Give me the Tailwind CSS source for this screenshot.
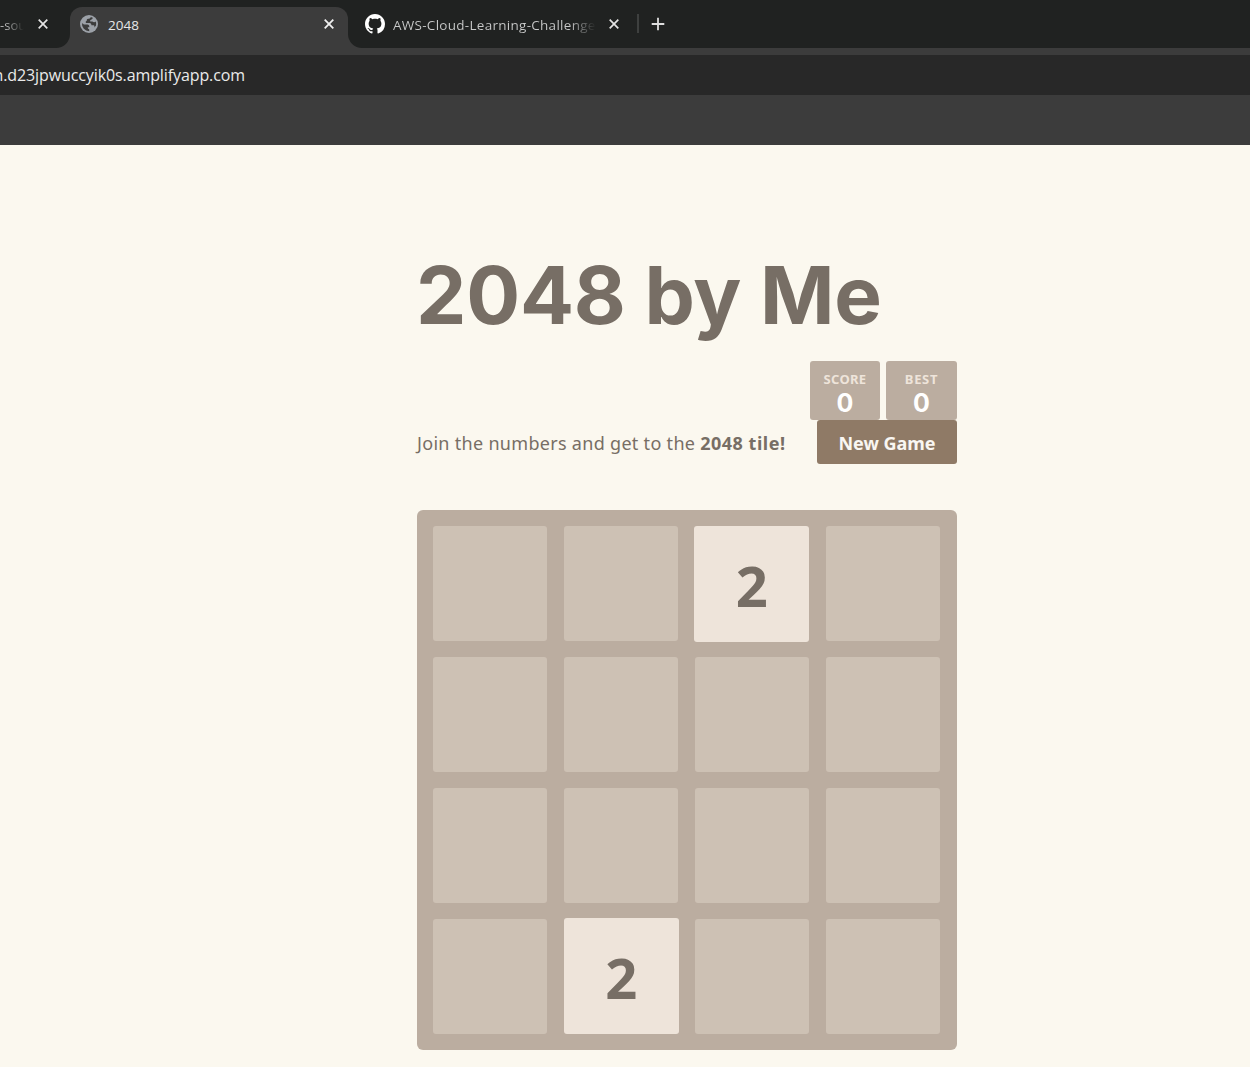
<!DOCTYPE html>
<html lang="en">
<head>
<meta charset="utf-8">
<title>2048</title>
<script src="https://cdn.jsdelivr.net/npm/@tailwindcss/browser@4"></script>
</head>
<body class="w-[1250px] h-[1067px] overflow-hidden bg-[#fbf8ef] font-['Noto_Sans',sans-serif] text-[#776e65]">
<header class="bg-[#3c3c3c] h-[145px] font-['Open_Sans',sans-serif]">
  <div class="flex h-12">
    <div class="flex w-[70px] bg-[#202221] rounded-br-[14px] pt-4 overflow-hidden">
      <span class="w-[37px] text-[13px] leading-[18px] whitespace-nowrap bg-linear-to-r from-[#b8b9b9] from-20% to-[#202221] to-65% bg-clip-text text-transparent">-sou</span>
      <svg class="w-3 h-4" viewBox="0 0 12 16" stroke="#e4e4e4" stroke-width="1.7"><path d="M1.7 3.7l8.6 8.6M10.3 3.7l-8.6 8.6"/></svg>
    </div>
    <div class="w-[278px] bg-[#202221] pt-[7px]">
      <div class="flex h-full bg-[#3c3c3c] rounded-t-[12px] pl-[10px] pt-[8px]">
        <svg class="w-[18px] h-[18px]" viewBox="0 0 18 18"><circle cx="9" cy="9" r="9" fill="#9ca1a8"/><path fill="#3c3c3c" d="M10.8 2C10.5 3.4 9.6 3.6 8.2 3.8 6.8 4 6.6 5 6.8 5.8 5.6 6.2 5.3 7.4 6.2 8H9.6C11 8.3 11.3 9.2 11.5 10.3H13.6C14.4 10.5 14.6 11.4 14.4 12.4L16 10.4A7.2 7.2 0 0 0 15.8 6.6C14.6 7.4 13.2 7.3 12.4 6.4H10.2V5.2C11.4 4.8 12.6 4.2 12.8 2.8zM2 8.2A7.2 7.2 0 0 0 9.2 16.2V14.2C8 14 7.8 13.2 7.8 12.2H9.3C9.6 10.8 8.7 9.8 7.3 9.6H4.6C3.6 9.5 3 8.6 2 8.2z"/></svg>
        <span class="ml-[10px] w-[215px] pt-px text-[13.5px] leading-[18px] text-[#e6e6e6]">2048</span>
        <svg class="w-3 h-4 mt-px" viewBox="0 0 12 16" stroke="#f0f0f0" stroke-width="1.8"><path d="M1.7 3.7l8.6 8.6M10.3 3.7l-8.6 8.6"/></svg>
      </div>
    </div>
    <div class="flex flex-1 bg-[#202221] rounded-bl-[14px] pl-[17px] pt-[14px]">
      <svg class="w-5 h-5" viewBox="0 0 16 16" fill="#fff"><path d="M8 0C3.58 0 0 3.58 0 8c0 3.54 2.29 6.53 5.47 7.59.4.07.55-.17.55-.38 0-.19-.01-.82-.01-1.49-2.01.37-2.53-.49-2.69-.94-.09-.23-.48-.94-.82-1.13-.28-.15-.68-.52-.01-.53.63-.01 1.08.58 1.23.82.72 1.21 1.87.87 2.33.66.07-.52.28-.87.51-1.07-1.78-.2-3.64-.89-3.64-3.95 0-.87.31-1.59.82-2.15-.08-.2-.36-1.02.08-2.12 0 0 .67-.21 2.2.82.64-.18 1.32-.27 2-.27s1.36.09 2 .27c1.53-1.04 2.2-.82 2.2-.82.44 1.1.16 1.92.08 2.12.51.56.82 1.27.82 2.15 0 3.07-1.87 3.75-3.65 3.95.29.25.54.73.54 1.48 0 1.07-.01 1.93-.01 2.2 0 .21.15.46.55.38A8.01 8.01 0 0 0 16 8c0-4.42-3.58-8-8-8z"/></svg>
      <span class="ml-2 mt-[2px] w-[203px] h-[18px] overflow-hidden text-[13.5px] leading-[18px] tracking-[0.28px] whitespace-nowrap bg-linear-to-r from-[#c9caca] from-87% to-[#202221] bg-clip-text text-transparent">AWS-Cloud-Learning-Challenge</span>
      <svg class="w-3 h-4 ml-[12px] mt-[2px]" viewBox="0 0 12 16" stroke="#e4e4e4" stroke-width="1.7"><path d="M1.7 3.7l8.6 8.6M10.3 3.7l-8.6 8.6"/></svg>
      <div class="w-[2px] h-[19px] bg-[#3e403f] ml-[17px]"></div>
      <svg class="w-[14px] h-[14px] ml-[12px] mt-[3px]" viewBox="0 0 14 14" stroke="#dedede" stroke-width="1.8"><path d="M7 .7v12.6M.7 7h12.6"/></svg>
    </div>
  </div>
  <div class="mt-[7px] h-10 bg-[#282828]">
    <div class="w-[245px] flex justify-end text-[16px] leading-10 text-[#eaeaea] whitespace-nowrap tracking-[-0.1px]">n.d23jpwuccyik0s.amplifyapp.com</div>
  </div>
</header>
<main class="ml-[417px] w-[540px] pt-[95px]">
  <h1 class="h-[121px] text-[80px] leading-[110px] font-bold font-[Inter,sans-serif] whitespace-nowrap tracking-[-0.2px] -ml-px">2048 by Me</h1>
  <div class="flex justify-end gap-[6px] font-bold text-center">
    <div class="w-[70px] h-[59px] bg-[#bbada0] rounded-[3px] pt-[11px]">
      <div class="text-[13px] leading-[14px] tracking-[0.3px] text-[#eee4da]">SCORE</div>
      <div class="text-[25px] leading-[34px] text-white font-[Inter,sans-serif]">0</div>
    </div>
    <div class="w-[71px] h-[59px] bg-[#bbada0] rounded-[3px] pt-[11px]">
      <div class="text-[13px] leading-[14px] tracking-[0.7px] text-[#eee4da]">BEST</div>
      <div class="text-[25px] leading-[34px] text-white font-[Inter,sans-serif]">0</div>
    </div>
  </div>
  <div class="flex justify-between">
    <p class="text-[18px] leading-[46px] whitespace-nowrap tracking-[0.3px]">Join the numbers and get to the <strong class="font-bold tracking-[0.5px]">2048 tile!</strong></p>
    <button class="w-[140px] h-[44px] rounded-[3px] bg-[#8f7a66] text-[#f9f6f2] text-[18px] leading-[46px] font-bold">New Game</button>
  </div>
  <div class="mt-[44px] w-[540px] h-[540px] rounded-[6px] bg-[#bbada0] p-4 grid grid-cols-[repeat(4,114px)] grid-rows-[repeat(4,115px)] gap-x-[17px] gap-y-4 text-[56px] font-bold">
    <div class="rounded-[3px] bg-[#cdc1b4]"></div>
    <div class="rounded-[3px] bg-[#cdc1b4]"></div>
    <div class="rounded-[3px] bg-[#eee4da] -ml-[0.7px] -mr-[0.4px] -mb-px flex items-center justify-center pt-px">2</div>
    <div class="rounded-[3px] bg-[#cdc1b4]"></div>
    <div class="rounded-[3px] bg-[#cdc1b4]"></div>
    <div class="rounded-[3px] bg-[#cdc1b4]"></div>
    <div class="rounded-[3px] bg-[#cdc1b4]"></div>
    <div class="rounded-[3px] bg-[#cdc1b4]"></div>
    <div class="rounded-[3px] bg-[#cdc1b4]"></div>
    <div class="rounded-[3px] bg-[#cdc1b4]"></div>
    <div class="rounded-[3px] bg-[#cdc1b4]"></div>
    <div class="rounded-[3px] bg-[#cdc1b4]"></div>
    <div class="rounded-[3px] bg-[#cdc1b4]"></div>
    <div class="rounded-[3px] bg-[#eee4da] -ml-[0.4px] -mr-[0.7px] -mt-px flex items-center justify-center pt-px">2</div>
    <div class="rounded-[3px] bg-[#cdc1b4]"></div>
    <div class="rounded-[3px] bg-[#cdc1b4]"></div>
  </div>
</main>
</body>
</html>
